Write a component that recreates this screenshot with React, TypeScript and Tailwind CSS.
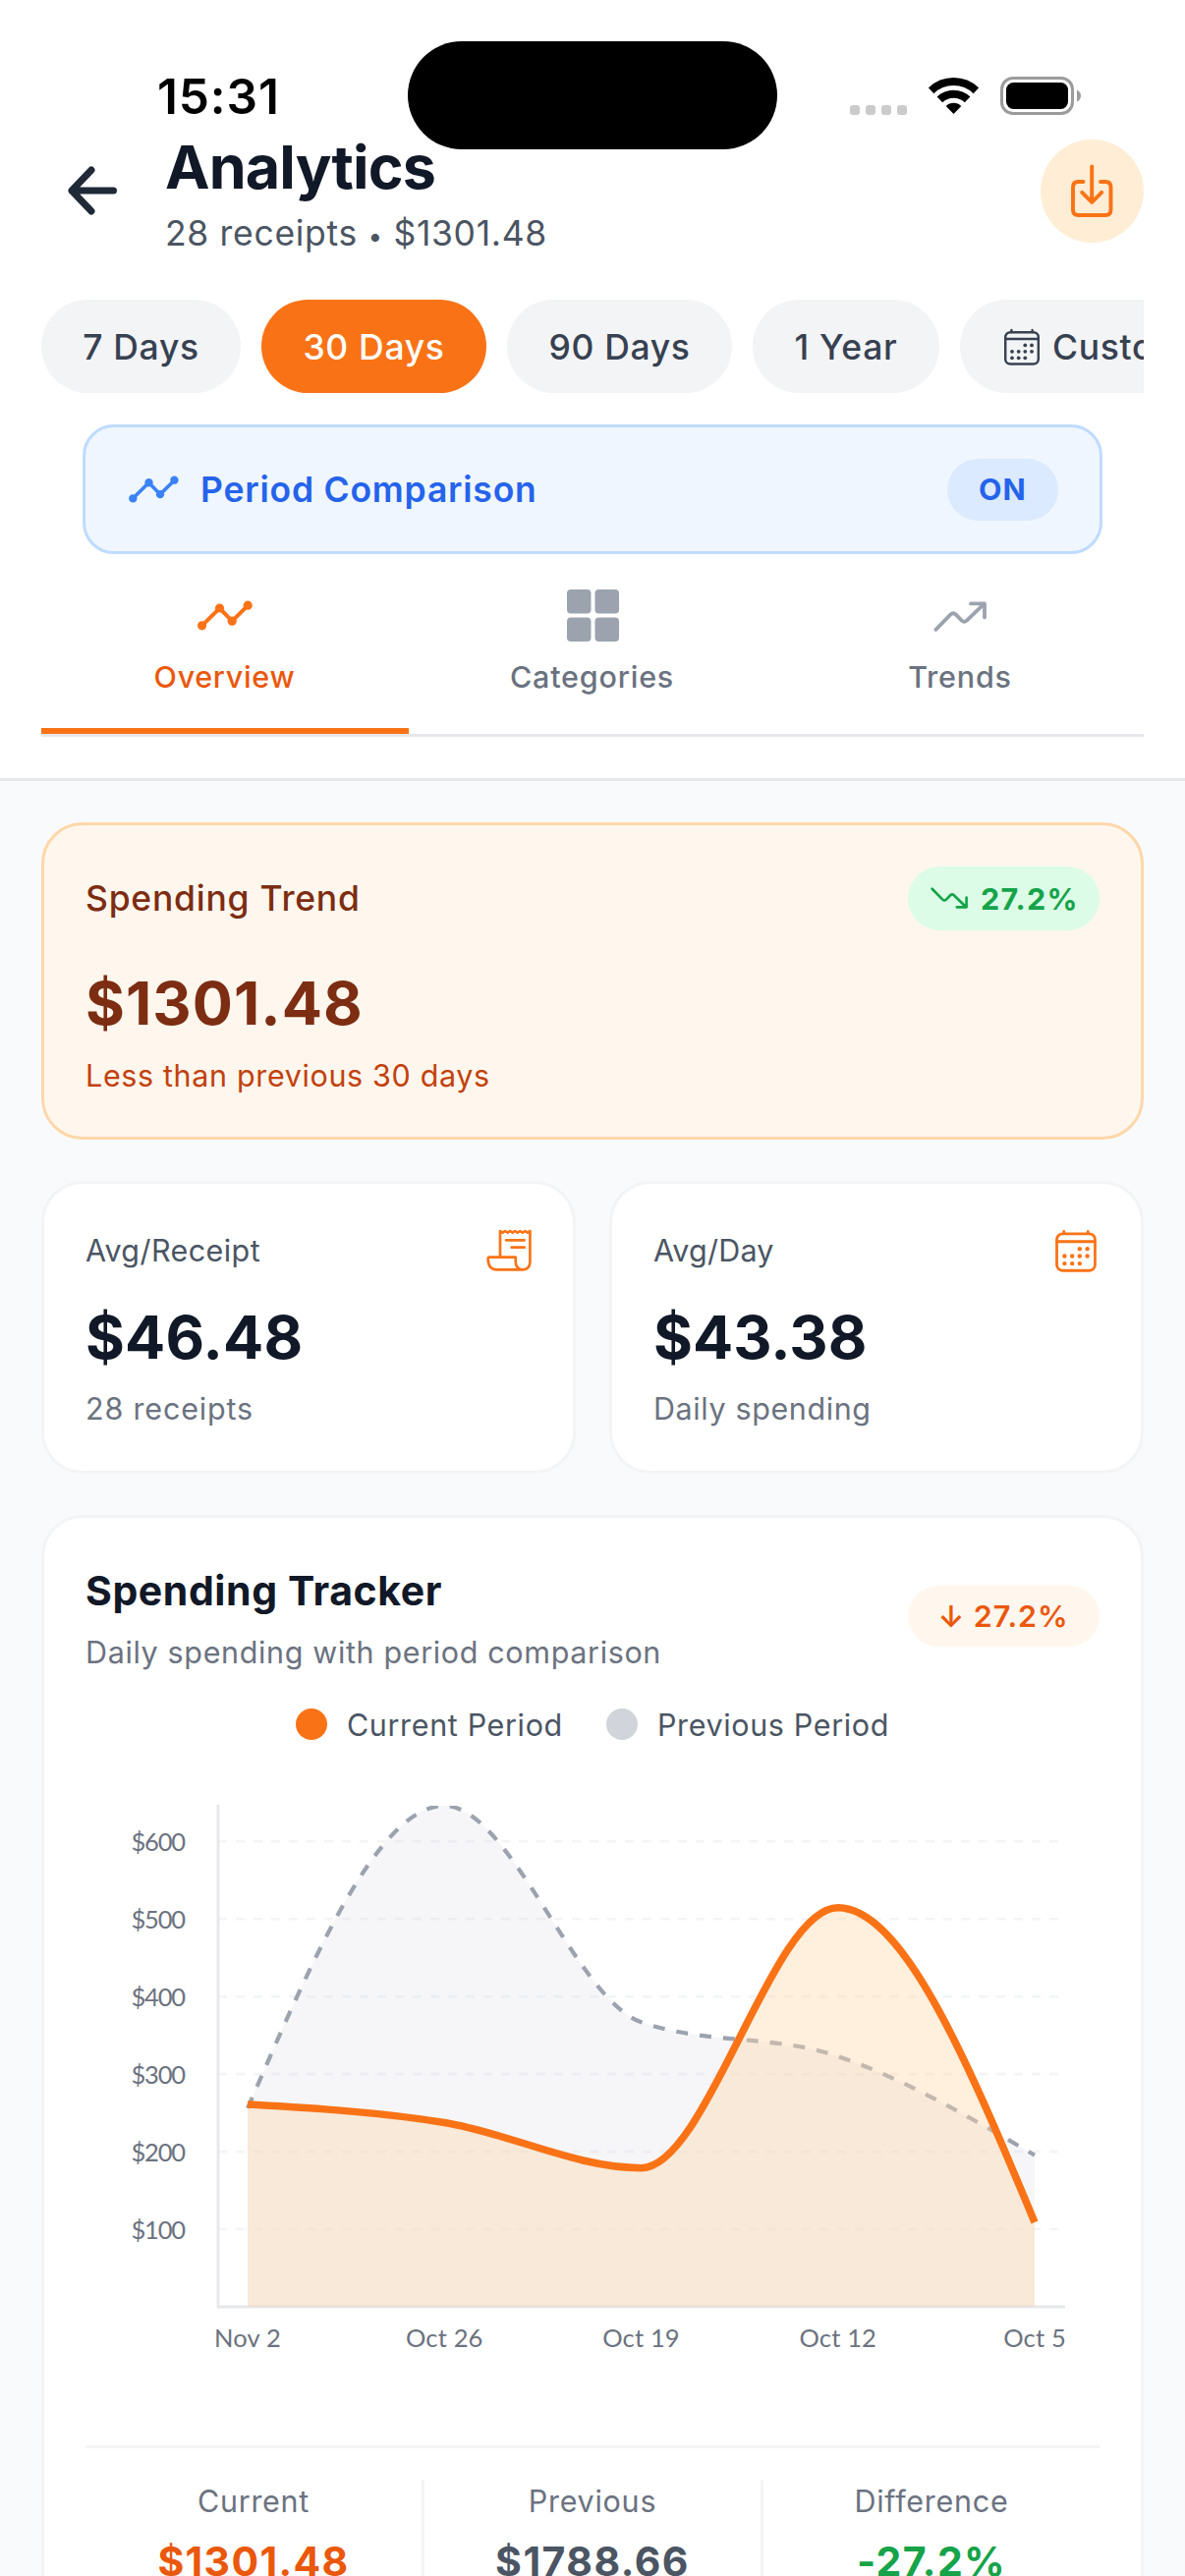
import React, {useState} from "react";

type IconProps = { className?: string };

const periods = [
    { label: '7 Days', width: 'w-[203px]' },
    { label: '30 Days', width: 'w-[229px]' },
    { label: '90 Days', width: 'w-[229px]' },
    { label: '1 Year', width: 'w-[190px]' },
];

const labels = ['Nov 2', 'Oct 26', 'Oct 19', 'Oct 12', 'Oct 5'];
const current = [261, 237.5, 179, 514.5, 109];
const previous = [256, 646, 367, 323, 195.5];

const BackIcon = ({ className }: IconProps) => (
    <svg viewBox="0 0 52 52" fill="none" stroke="currentColor" strokeWidth="7" strokeLinecap="round" strokeLinejoin="round" className={className}>
        <path d="M25 5 5 26l20 21M5 26h42.5" />
    </svg>
);

const DownloadIcon = ({ className }: IconProps) => (
    <svg viewBox="0 0 44 54" fill="none" stroke="currentColor" strokeWidth="3.9" strokeLinecap="round" strokeLinejoin="round" className={className}>
        <path d="M13.5 18H8.5Q3 18 3 23.5v23Q3 52 8.5 52h27.5q5.5 0 5.5-5.5v-23q0-5.5-5.5-5.5h-5M22.2 2.5V38M12.2 28.8l10 10 10-10" />
    </svg>
);

const CalendarIcon = ({ className }: IconProps) => (
    <svg viewBox="0 0 38 38" className={className}>
        <g fill="none" stroke="currentColor" strokeWidth="2.4" strokeLinecap="round">
            <rect x="2.2" y="4.2" width="33.6" height="32.3" rx="5" />
            <path d="M2.2 11h33.6M8.4 2v2M29.6 2v2" />
        </g>
        <g fill="currentColor">
            <circle cx="22.3" cy="17.4" r="1.9" />
            <circle cx="29" cy="17.4" r="1.9" />
            <circle cx="9" cy="23.8" r="1.9" />
            <circle cx="15.7" cy="23.8" r="1.9" />
            <circle cx="22.3" cy="23.8" r="1.9" />
            <circle cx="29" cy="23.8" r="1.9" />
            <circle cx="9" cy="30.3" r="1.9" />
            <circle cx="15.7" cy="30.3" r="1.9" />
            <circle cx="22.3" cy="30.3" r="1.9" />
        </g>
    </svg>
);

const ReceiptIcon = ({ className }: IconProps) => (
    <svg viewBox="0 0 138 129" fill="none" stroke="currentColor" strokeWidth="8" strokeLinecap="round" strokeLinejoin="round" className={className}>
        <path d="M42 86V6l7.6 5 7.6-5 7.6 5 7.6-5 7.6 5 7.6-5 7.6 5 7.6-5 7.6 5 7.6-5 7.6 5 7.6-5v94q0 24-22 24-22-1-22-24V86H9q-4 0-4 6 1 32 28 32h78" />
        <path d="M60 34h56M77 56h39" />
    </svg>
);

const LineGraphIcon = ({ className }: IconProps) => (
    <svg viewBox="0 0 56 31" className={className}>
        <path d="M4.5 25.8 22.5 8l12.7 13.2L51.4 5.2" fill="none" stroke="currentColor" strokeWidth="4" />
        <g fill="currentColor">
            <circle cx="4.6" cy="25.8" r="4.6" />
            <circle cx="22.5" cy="8" r="4.6" />
            <circle cx="35.2" cy="21.2" r="4.6" />
            <circle cx="51.2" cy="5.2" r="4.6" />
        </g>
    </svg>
);

const GridIcon = ({ className }: IconProps) => (
    <svg viewBox="0 0 53 53" fill="currentColor" className={className}>
        <rect width="24.5" height="24.5" rx="4" />
        <rect x="28.5" width="24.5" height="24.5" rx="4" />
        <rect y="28.5" width="24.5" height="24.5" rx="4" />
        <rect x="28.5" y="28.5" width="24.5" height="24.5" rx="4" />
    </svg>
);

const TrendIcon = ({ className }: IconProps) => (
    <svg viewBox="0 0 54 32" fill="none" stroke="currentColor" strokeWidth="3.8" strokeLinecap="round" strokeLinejoin="round" className={className}>
        <path d="M2.4 29.8 17.5 14.4q2.6-2.4 5.2 0l6 6.2q2.6 2.4 5.2 0L51.5 3.6M38 3.4h14v14" />
    </svg>
);

const StatusBar = () => (
    <div className="flex h-[142px] pt-[41px]">
        <div className="flex h-28 w-[415px] shrink-0 items-center pt-0.5 pl-40 text-[49.5px] font-semibold tracking-[0.018em] text-black">
            15:31
        </div>
        <div className="mt-px h-[110px] w-[376px] shrink-0 rounded-full bg-black" />
        <div className="flex h-28 items-center pt-px pl-[74px]">
            <div className="flex gap-1.5 pt-7">
                <div className="h-2.5 w-2.5 rounded-[3px] bg-[#cbcbcb]" />
                <div className="h-2.5 w-2.5 rounded-[3px] bg-[#cbcbcb]" />
                <div className="h-2.5 w-2.5 rounded-[3px] bg-[#cbcbcb]" />
                <div className="h-2.5 w-2.5 rounded-[3px] bg-[#cbcbcb]" />
            </div>
            <svg viewBox="0 0 51 37" className="ml-[22px] h-[37px] w-[51px]">
                <g fill="none" stroke="#000" strokeWidth="8">
                    <path d="M2.6 13.3a33 33 0 0 1 45.8 0" />
                    <path d="M11.4 22.4a20.3 20.3 0 0 1 28.2 0" />
                </g>
                <path d="M25.5 37l-7.8-8.1a11.3 11.3 0 0 1 15.6 0z" />
            </svg>
            <svg viewBox="0 0 83 39" className="ml-[22px] h-[39px] w-[83px]">
                <rect x="1.5" y="1.5" width="72" height="36" rx="11.5" fill="none" stroke="#9b9b9b" strokeWidth="3" />
                <rect x="6" y="6" width="63" height="27" rx="7.5" />
                <path d="M78 13.5q4 2 4 6t-4 6z" fill="#9b9b9b" />
            </svg>
        </div>
    </div>
);

// monotone cubic through evenly spaced points
const monotonePath = (ys: number[], x0: number, step: number) => {
    const n = ys.length;
    const slopes = ys.slice(1).map((y, i) => (y - ys[i]) / step);
    const tangents = ys.map((_, i) => {
        if (i === 0 || i === n - 1) return 0;
        const a = slopes[i - 1];
        const b = slopes[i];
        if (a * b <= 0) return 0;
        return Math.sign(a) * Math.min(Math.abs(a), Math.abs(b), 0.25 * Math.abs(a + b)) * 2;
    });
    tangents[0] = (3 * slopes[0] - tangents[1]) / 2;
    tangents[n - 1] = (3 * slopes[n - 2] - tangents[n - 2]) / 2;

    let d = `M${x0},${ys[0]}`;
    for (let i = 1; i < n; i++) {
        const xa = x0 + (i - 1) * step;
        const xb = x0 + i * step;
        d += `C${xa + step / 3},${ys[i - 1] + (tangents[i - 1] * step) / 3} ${xb - step / 3},${ys[i] - (tangents[i] * step) / 3} ${xb},${ys[i]}`;
    }
    return d;
};

const SpendingChart = () => {
    const baseY = 571;
    const topY = 61;
    const firstX = 165;
    const step = 200.25;
    const toY = (value: number) => baseY - value * 0.7895;

    const currentLine = monotonePath(current.map(toY), firstX, step);
    const previousLine = monotonePath(previous.map(toY), firstX, step);
    const close = `V${baseY}H${firstX}Z`;

    return (
        <svg viewBox="0 0 1032 712" className="block h-[712px] w-full font-['Lato',sans-serif] text-[25.5px]">
            <defs>
                <clipPath id="plot">
                    <rect x="135" y={topY} width="862" height={baseY - topY} />
                </clipPath>
            </defs>
            {[100, 200, 300, 400, 500, 600].map((tick) => (
                <g key={tick}>
                    <line x1="135" x2="991" y1={toY(tick)} y2={toY(tick)} stroke="#f3f4f6" strokeWidth="2.6" strokeDasharray="9 9" />
                    <text x="101" y={toY(tick) + 9.5} textAnchor="end" fill="#6b7280" className="tracking-[-0.045em]">${tick}</text>
                </g>
            ))}
            <path d={`M135 ${topY - 1}V${baseY}H997`} fill="none" stroke="#e5e7eb" strokeWidth="2.8" />
            {labels.map((label, i) => (
                <text key={label} x={firstX + i * step} y="611.8" textAnchor="middle" fill="#6b7280" className="tracking-[0.006em]">{label}</text>
            ))}
            <g clipPath="url(#plot)">
                <path d={previousLine + close} fill="#d4d4e0" fillOpacity="0.2" />
                <path d={previousLine} fill="none" stroke="#9ca3af" strokeWidth="4.2" strokeDasharray="12 12" />
                <path d={currentLine + close} fill="#fed7aa" fillOpacity="0.4" />
                <path d={currentLine} fill="none" stroke="#f97316" strokeWidth="7.5" />
            </g>
        </svg>
    );
};

const App = () => {
    const [period, setPeriod] = useState('30 Days');
    const [comparison, setComparison] = useState(true);

    return (
        <div className="h-[2622px] w-[1206px] overflow-hidden bg-[#f9fafb] font-['Inter',sans-serif] text-[30.5px] leading-[42px]">
            <header className="border-b-[3px] border-[#e5e7eb] bg-white pb-[42px]">
                <StatusBar />

                <div className="mx-[42px] flex h-[105px] items-center">
                    <button className="flex h-[105px] w-[105px] items-center justify-center pr-0.5 pb-0.5">
                        <BackIcon className="h-[52px] w-[52px] text-[#1f2937]" />
                    </button>
                    <div className="ml-[21px] flex-1 pt-[3px]">
                        <h1 className="text-[61px] font-bold leading-[84px] tracking-[-0.014em] text-[#111827]">Analytics</h1>
                        <p className="h-[52px] text-[35.5px] leading-[52px] tracking-[0.019em] text-[#4b5563]">
                            28 receipts <span className="text-[26px]">•</span> $1301.48
                        </p>
                    </div>
                    <button className="flex h-[105px] w-[105px] items-center justify-center rounded-full bg-[#ffedd5] pr-px pb-px">
                        <DownloadIcon className="h-[54px] w-11 text-[#f97316]" />
                    </button>
                </div>

                <div className="mx-[42px] mt-[58px] flex gap-[21px] overflow-hidden text-[35.5px] font-medium tracking-[0.019em]">
                    {periods.map((p) => (
                        <button
                            key={p.label}
                            onClick={() => setPeriod(p.label)}
                            className={`h-[95px] shrink-0 rounded-full pt-0.5 ${p.width} ${period === p.label ? 'bg-[#f97316] text-white' : 'bg-[#f3f4f6] text-[#374151]'}`}
                        >
                            {p.label}
                        </button>
                    ))}
                    <button className="flex h-[95px] w-[280px] shrink-0 items-center gap-3 rounded-full bg-[#f3f4f6] pl-11 text-[#374151]">
                        <CalendarIcon className="h-[38px] w-[38px]" />
                        <span className="pt-0.5">Custom</span>
                    </button>
                </div>

                <button
                    onClick={() => setComparison(!comparison)}
                    className="mx-[84px] mt-8 flex h-[132px] w-[1038px] items-center rounded-[32px] border-[3px] border-[#bfdbfe] bg-[#eff6ff] px-[42px] text-[#2563eb]"
                >
                    <LineGraphIcon className="ml-0.5 h-[28px] w-[51px] text-[#3b82f6]" />
                    <span className="ml-[22px] flex-1 pt-px text-left text-[35.5px] font-semibold tracking-[0.022em]">Period Comparison</span>
                    <span className="flex h-[63px] w-[113px] items-center justify-center rounded-full bg-[#dbeafe] font-bold tracking-[0.04em]">
                        {comparison ? 'ON' : 'OFF'}
                    </span>
                </button>

                <nav className="mx-[42px] grid grid-cols-3 border-b-[3px] border-[#e5e7eb] font-medium tracking-[0.026em] text-[#6b7280]">
                    <button className="flex flex-col items-center border-b-[6px] border-[#f97316] pt-9 pb-[31px] text-[#ea580c]">
                        <span className="flex h-[53px] items-center"><LineGraphIcon className="h-[31px] w-[56px] text-[#f97316]" /></span>
                        <span className="mt-[15px] pr-px tracking-[0.022em]">Overview</span>
                    </button>
                    <button className="flex flex-col items-center pt-9 pb-[37px]">
                        <GridIcon className="h-[53px] w-[53px] text-[#9ca3af]" />
                        <span className="mt-[15px] pr-px">Categories</span>
                    </button>
                    <button className="flex flex-col items-center pt-9 pb-[37px]">
                        <span className="flex h-[53px] items-center"><TrendIcon className="h-8 w-[54px] text-[#9ca3af]" /></span>
                        <span className="mt-[15px]">Trends</span>
                    </button>
                </nav>
            </header>

            <main className="flex flex-col gap-[42px] p-[42px]">
                <section className="h-[323px] rounded-[42px] border-[3px] border-[#fed7aa] bg-[#fff7ed] p-[42px] text-[#7c2d12]">
                    <div className="flex items-center justify-between">
                        <h2 className="pt-px text-[35.5px] font-medium tracking-[0.021em]">Spending Trend</h2>
                        <div className="flex h-[65px] w-[195px] items-center rounded-full bg-[#dcfce7] pl-[23px] text-[#16a34a]">
                            <TrendIcon className="h-[23px] w-[38px] -scale-y-100" />
                            <span className="ml-[13px] font-bold tracking-[0.04em]">27.2%</span>
                        </div>
                    </div>
                    <p className="mt-8 text-[61px] font-bold leading-[84px] tracking-[0.017em]">$1301.48</p>
                    <p className="mt-[11px] tracking-[0.021em] text-[#c2410c]">Less than previous 30 days</p>
                </section>

                <div className="grid grid-cols-2 gap-[34px] text-[#6b7280]">
                    <section className="h-[298px] rounded-[42px] border-[3px] border-[#f3f4f6] bg-white p-[42px]">
                        <div className="flex h-[51px] items-center justify-between">
                            <h3 className="tracking-[0.014em] text-[#4b5563]">Avg/Receipt</h3>
                            <ReceiptIcon className="h-[43px] w-[46px] text-[#f97316]" />
                        </div>
                        <p className="mt-[21px] text-[61px] font-bold leading-[84px] tracking-[0.003em] text-[#111827]">$46.48</p>
                        <p className="mt-2.5 tracking-[0.027em]">28 receipts</p>
                    </section>
                    <section className="h-[298px] rounded-[42px] border-[3px] border-[#f3f4f6] bg-white p-[42px]">
                        <div className="flex h-[51px] items-center justify-between">
                            <h3 className="tracking-[0.008em] text-[#4b5563]">Avg/Day</h3>
                            <CalendarIcon className="mr-0.5 h-11 w-11 text-[#f97316]" />
                        </div>
                        <p className="mt-[21px] text-[61px] font-bold leading-[84px] text-[#111827]">$43.38</p>
                        <p className="mt-2.5 tracking-[0.02em]">Daily spending</p>
                    </section>
                </div>

                <section className="rounded-[42px] border-[3px] border-[#f3f4f6] bg-white p-[42px] text-[#6b7280]">
                    <div className="flex items-center justify-between">
                        <div>
                            <h2 className="pt-px text-[41px] font-bold leading-[62px] tracking-[0.014em] text-[#111827]">Spending Tracker</h2>
                            <p className="mt-[11px] tracking-[0.021em]">Daily spending with period comparison</p>
                        </div>
                        <div className="mb-px flex h-[62px] w-[195px] items-center justify-center rounded-full bg-[#fff7ed] pr-px font-semibold tracking-[0.03em] text-[#ea580c]">
                            ↓ 27.2%
                        </div>
                    </div>

                    <div className="mt-8 flex justify-center gap-11 tracking-[0.021em] text-[#4b5563]">
                        <div className="flex items-center gap-5">
                            <div className="-mt-[3px] h-8 w-8 rounded-full bg-[#f97316]" />
                            Current Period
                        </div>
                        <div className="flex items-center gap-5">
                            <div className="-mt-[3px] h-8 w-8 rounded-full bg-[#d1d5db]" />
                            Previous Period
                        </div>
                    </div>

                    <SpendingChart />

                    <div className="grid grid-cols-[345px_345px_342px] border-t-[3px] border-[#f3f4f6] pt-8 text-center tracking-[0.024em]">
                        <div className="border-r-[3px] border-[#f3f4f6] pt-px">
                            <p>Current</p>
                            <p className="mt-[9px] text-[41px] font-bold leading-[63px] tracking-[0.033em] text-[#ea580c]">$1301.48</p>
                        </div>
                        <div className="border-r-[3px] border-[#f3f4f6] pt-px">
                            <p>Previous</p>
                            <p className="mt-[9px] text-[41px] font-bold leading-[63px] tracking-[0.036em] text-[#4b5563]">$1788.66</p>
                        </div>
                        <div className="pt-px">
                            <p>Difference</p>
                            <p className="mt-[9px] text-[41px] font-bold leading-[63px] tracking-[0.033em] text-[#16a34a]">-27.2%</p>
                        </div>
                    </div>
                </section>
            </main>
        </div>
    );
};

export default App;
